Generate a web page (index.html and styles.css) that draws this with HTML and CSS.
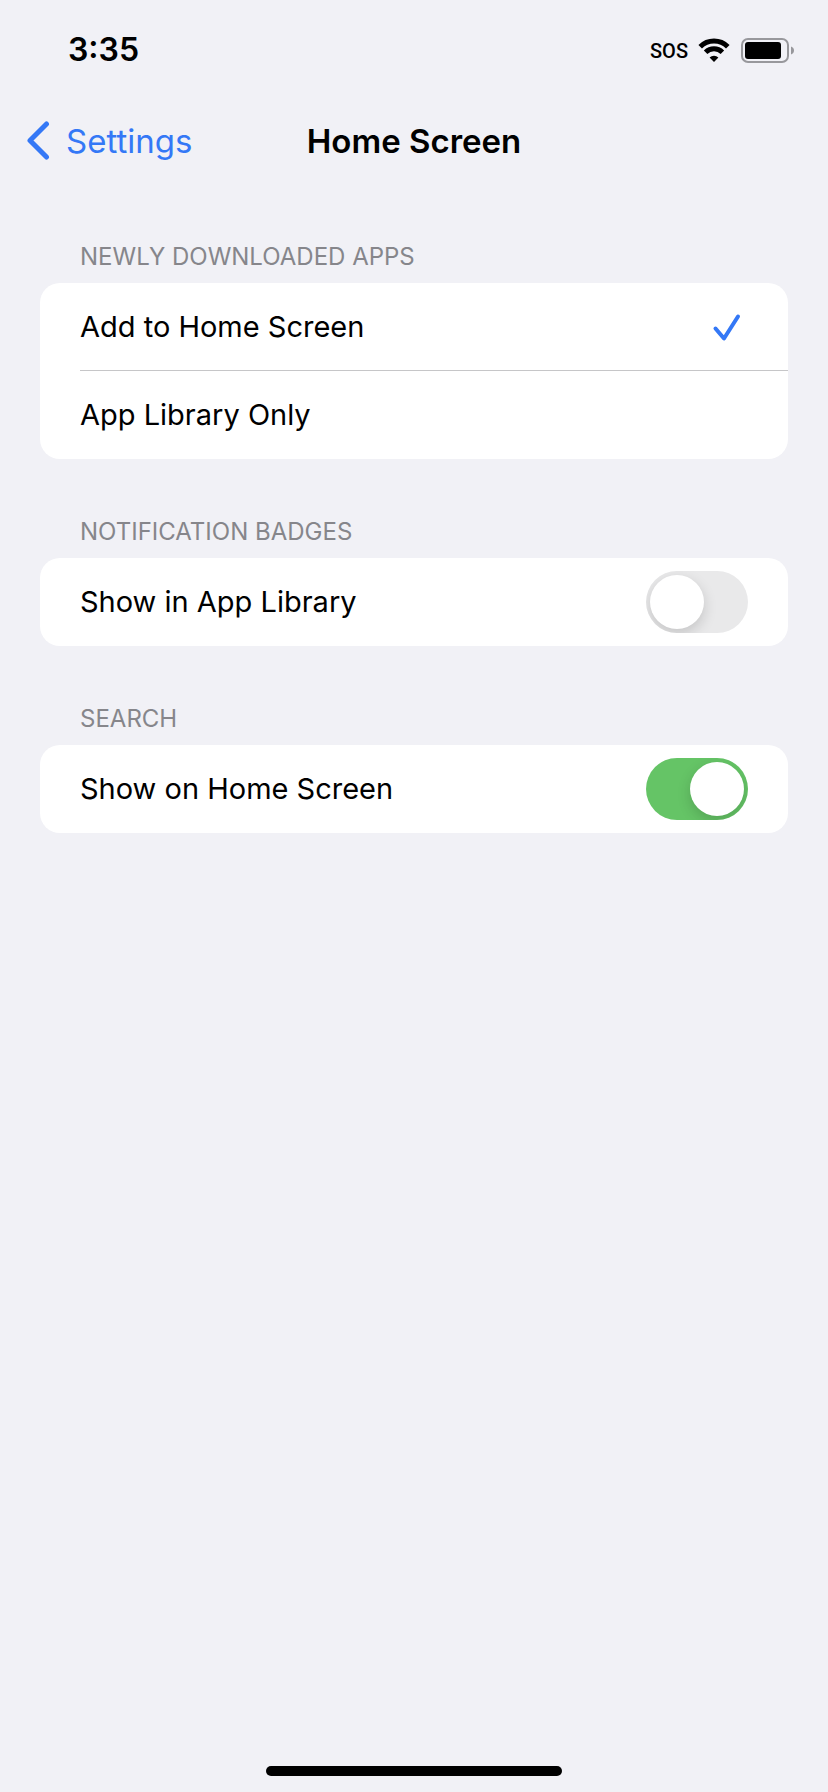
FILE: index.html
```html
<!DOCTYPE html>
<html lang="en">
<head>
<meta charset="utf-8">
<meta name="viewport" content="width=device-width, initial-scale=1">
<title>Home Screen</title>
<link rel="stylesheet" href="styles.css">
</head>
<body>
<div class="status-bar">
  <time class="clock">3:35</time>
  <div class="indicators">
    <span class="carrier">SOS</span>
    <svg class="wifi" viewBox="0 0 32 24" width="32" height="24" role="img" aria-label="Wi-Fi">
      <g fill="none" stroke="#000" stroke-width="5">
        <path d="M2.200 8.700a19.500 19.500 0 0 1 27.600 0"/>
        <path d="M7.600 14.300a12 12 0 0 1 16.800 0"/>
      </g>
      <path d="M16 24l-4.400-4.500a6.200 6.200 0 0 1 8.800 0z"/>
    </svg>
    <svg class="battery" viewBox="0 0 54 26" width="54" height="26" role="img" aria-label="Battery">
      <rect x="2" y="2" width="46" height="23" rx="6" fill="none" stroke="#98989c" stroke-width="2"/>
      <rect x="5" y="5" width="36" height="17" rx="3"/>
      <path d="M51 9.500c2 .7 3 2.200 3 4s-1 3.300-3 4z" fill="#98989c"/>
    </svg>
  </div>
</div>
<header class="nav-bar">
  <a class="back" href="#">
    <svg viewBox="0 0 24 40" width="24" height="40" aria-hidden="true"><path d="M20.500 3L4 19.500l16.500 16.500" fill="none" stroke="#3478f6" stroke-width="5" stroke-linecap="round" stroke-linejoin="round"/></svg>
    <span>Settings</span>
  </a>
  <h1 class="title">Home Screen</h1>
</header>
<main class="groups">
  <section class="group">
    <h2 class="group-label">NEWLY DOWNLOADED APPS</h2>
    <div class="card">
      <label class="row">
        <span>Add to Home Screen</span>
        <input class="choice" type="radio" name="new-apps" checked>
        <svg class="check" viewBox="0 0 30 30" width="30" height="30" aria-hidden="true"><path d="M3.500 16.500l8.500 10L26 4.500" fill="none" stroke="#3478f6" stroke-width="4" stroke-linecap="round" stroke-linejoin="round"/></svg>
      </label>
      <label class="row">
        <span>App Library Only</span>
        <input class="choice" type="radio" name="new-apps">
        <svg class="check" viewBox="0 0 30 30" width="30" height="30" aria-hidden="true"><path d="M3.500 16.500l8.500 10L26 4.500" fill="none" stroke="#3478f6" stroke-width="4" stroke-linecap="round" stroke-linejoin="round"/></svg>
      </label>
    </div>
  </section>
  <section class="group">
    <h2 class="group-label">NOTIFICATION BADGES</h2>
    <div class="card">
      <label class="row">
        <span>Show in App Library</span>
        <input class="switch" type="checkbox" role="switch">
      </label>
    </div>
  </section>
  <section class="group">
    <h2 class="group-label">SEARCH</h2>
    <div class="card">
      <label class="row">
        <span>Show on Home Screen</span>
        <input class="switch" type="checkbox" role="switch" checked>
      </label>
    </div>
  </section>
</main>
<footer class="home-area"><div class="home-indicator"></div></footer>
</body>
</html>
```
FILE: styles.css
```css
* {
  box-sizing: border-box;
}

body {
  margin: 0;
  min-height: 100vh;
  display: flex;
  flex-direction: column;
  background: #f1f1f6;
  color: #000;
  font-family: Inter, "Liberation Sans", sans-serif;
}

.status-bar {
  display: flex;
  align-items: center;
  justify-content: space-between;
  height: 96px;
  padding: 4px 34px 0 68px;
}

.clock {
  font-size: 32px;
  line-height: 40px;
  font-weight: 600;
}

.indicators {
  display: flex;
  align-items: center;
  gap: 10px;
}

.carrier {
  padding-top: 2px;
  font-family: Roboto, sans-serif;
  font-size: 20px;
  line-height: 24px;
  font-weight: 500;
}

.nav-bar {
  display: grid;
  grid-template-columns: 1fr auto 1fr;
  align-items: center;
  height: 88px;
  padding: 2px 26px 0;
}

.back {
  display: flex;
  align-items: center;
  gap: 16px;
  color: #3478f6;
  font-size: 33px;
  line-height: 40px;
  text-decoration: none;
}

.title {
  margin: 0;
  font-size: 33px;
  line-height: 40px;
  font-weight: 600;
}

.groups {
  display: flex;
  flex: 1;
  flex-direction: column;
  gap: 57px;
  padding: 57px 40px;
}

.group-label {
  margin: 0;
  padding: 0 40px 10px;
  color: #86868b;
  font-size: 24px;
  line-height: 32px;
  font-weight: 400;
}

.card {
  overflow: hidden;
  border-radius: 20px;
  background: #fff;
}

.row {
  display: flex;
  align-items: center;
  justify-content: space-between;
  height: 88px;
  margin-left: 40px;
  padding-right: 40px;
  font-size: 29px;
  line-height: 40px;
}

.row + .row {
  box-shadow: 0 -1px #c6c6c8;
}

.choice {
  position: absolute;
  opacity: 0;
}

.check {
  margin-right: 6px;
  visibility: hidden;
}

.choice:checked + .check {
  visibility: visible;
}

.switch {
  appearance: none;
  display: flex;
  width: 102px;
  height: 62px;
  margin: 0;
  padding: 4px;
  overflow: hidden;
  border-radius: 31px;
  background: #e9e9ea;
}

.switch::before {
  content: "";
  width: 54px;
  height: 54px;
  border-radius: 50%;
  background: #fff;
  box-shadow: 0 5px 14px rgba(0, 0, 0, 0.16);
}

.switch:checked {
  justify-content: flex-end;
  background: #65c466;
}

.home-area {
  display: flex;
  justify-content: center;
  padding-bottom: 16px;
}

.home-indicator {
  width: 296px;
  height: 10px;
  border-radius: 5px;
  background: #000;
}
```
